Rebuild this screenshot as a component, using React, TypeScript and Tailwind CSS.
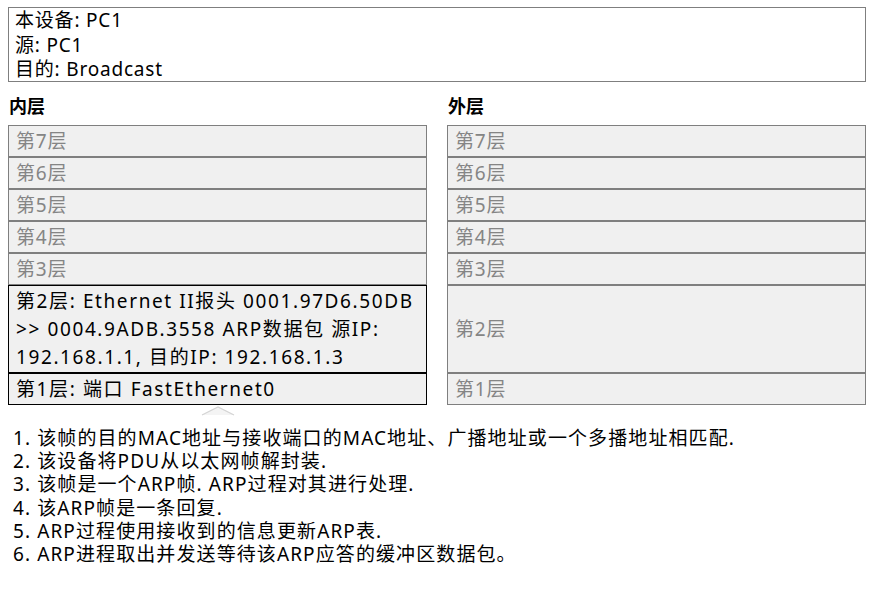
const FONT = { fontFamily: '"Noto Sans", "Noto Sans CJK SC", sans-serif' };

const upper = ["第7层", "第6层", "第5层", "第4层", "第3层"];

const steps = [
  "1. 该帧的目的MAC地址与接收端口的MAC地址、广播地址或一个多播地址相匹配.",
  "2. 该设备将PDU从以太网帧解封装.",
  "3. 该帧是一个ARP帧. ARP过程对其进行处理.",
  "4. 该ARP帧是一条回复.",
  "5. ARP过程使用接收到的信息更新ARP表.",
  "6. ARP进程取出并发送等待该ARP应答的缓冲区数据包。",
];

function GrayRow({ label, tall }: { label: string; tall?: boolean }) {
  return (
    <div
      className={`flex items-center border border-[#7f7f7f] bg-[#f0f0f0] px-[7px] text-[19px] tracking-[0.8px] text-[#858585] ${
        tall ? "h-[88px]" : "h-[32px]"
      }`}
    >
      {label}
    </div>
  );
}

export default function App() {
  return (
    <div className="bg-white text-black min-h-[599px] pt-[7px] pl-2 tracking-[0.8px]" style={FONT}>
      <div className="w-[858px] border border-[#7f7f7f] px-[6px] h-[75px] text-[19px] leading-[24.5px]">
        <div>本设备: PC1</div>
        <div>源: PC1</div>
        <div>目的: Broadcast</div>
      </div>

      <div className="grid grid-cols-2 gap-5 w-[858px] mt-[10px] tracking-normal">
        <div>
          <div className="font-bold text-[18px] leading-[28px] pl-[1px] mb-[5px]">内层</div>
          {upper.map((l) => (
            <GrayRow key={l} label={l} />
          ))}
          <div className="border border-black bg-[#f0f0f0] h-[88px] px-[7px] pt-[1px] text-[19px] tracking-[1.6px] leading-[28px] whitespace-nowrap">
            <div>第2层: Ethernet II报头 0001.97D6.50DB</div>
            <div>&gt;&gt; 0004.9ADB.3558 ARP数据包 源IP:</div>
            <div>192.168.1.1, 目的IP: 192.168.1.3</div>
          </div>
          <div className="flex items-center border border-black bg-[#f0f0f0] h-[32px] px-[7px] text-[19px] tracking-[1.6px] whitespace-nowrap">
            第1层: 端口 FastEthernet0
          </div>
          <div className="flex justify-center">
            <svg width="34" height="11" viewBox="0 0 34 11">
              <polygon points="1,10 17,2 33,10" fill="#f4f4f4" />
              <polyline points="1,10 17,2 33,10" fill="none" stroke="#d4d4d4" strokeWidth="1.2" />
            </svg>
          </div>
        </div>
        <div>
          <div className="font-bold text-[18px] leading-[28px] pl-[1px] mb-[5px]">外层</div>
          {upper.map((l) => (
            <GrayRow key={l} label={l} />
          ))}
          <GrayRow label="第2层" tall />
          <GrayRow label="第1层" />
        </div>
      </div>

      <div className="mt-[11px] pl-[5px] text-[19px] leading-[23.2px] tracking-[1.1px]">
        {steps.map((s) => (
          <div key={s}>{s}</div>
        ))}
      </div>
    </div>
  );
}
